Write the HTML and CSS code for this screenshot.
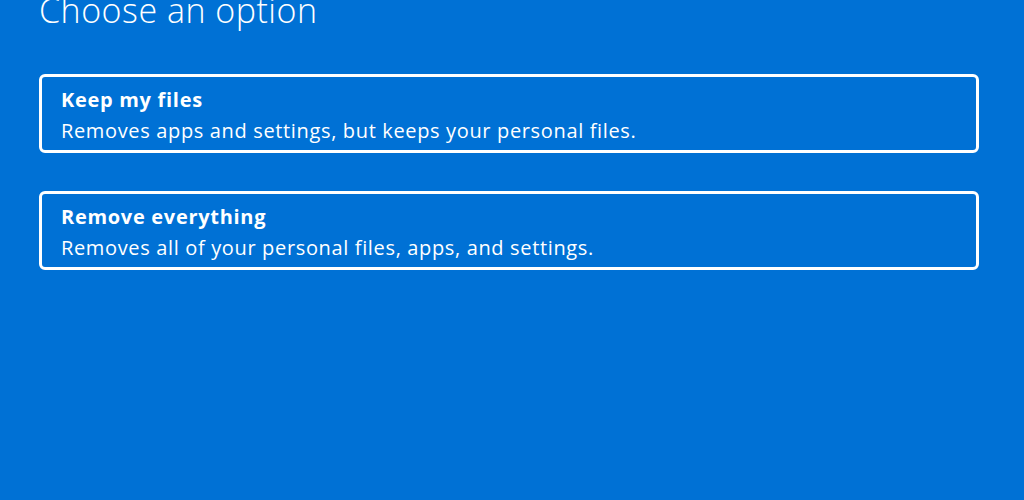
FILE: index.html
```html
<!DOCTYPE html>
<html>
<head>
<meta charset="utf-8">
<link rel="stylesheet" href="styles.css">
</head>
<body>
<main class="page">
  <h1 class="heading">Choose an option</h1>
  <div class="options">
    <div class="option">
      <div class="option-title">Keep my files</div>
      <div class="option-desc">Removes apps and settings, but keeps your personal files.</div>
    </div>
    <div class="option">
      <div class="option-title">Remove everything</div>
      <div class="option-desc">Removes all of your personal files, apps, and settings.</div>
    </div>
  </div>
</main>
</body>
</html>
```
FILE: styles.css
```css
html, body {
  margin: 0;
  padding: 0;
  background: #0071d5;
  height: 100%;
  overflow: hidden;
}
.page {
  padding: 0 45px 0 39px;
  font-family: "Open Sans", "Noto Sans", sans-serif;
  color: #ffffff;
}
.heading {
  margin: -12px 0 0 0;
  font-size: 34px;
  font-weight: 300;
  line-height: 44px;
  letter-spacing: 0.5px;
}
.options {
  margin-top: 42px;
  display: flex;
  flex-direction: column;
  gap: 38px;
}
.option {
  box-sizing: border-box;
  height: 79px;
  border: 3px solid #ffffff;
  border-radius: 6px;
  padding: 7px 19px 4px;
}
.option-title {
  font-size: 20px;
  font-weight: 700;
  line-height: 31px;
  letter-spacing: 0.7px;
}
.option-desc {
  font-size: 20px;
  font-weight: 400;
  line-height: 31px;
  letter-spacing: 0.65px;
}
```
